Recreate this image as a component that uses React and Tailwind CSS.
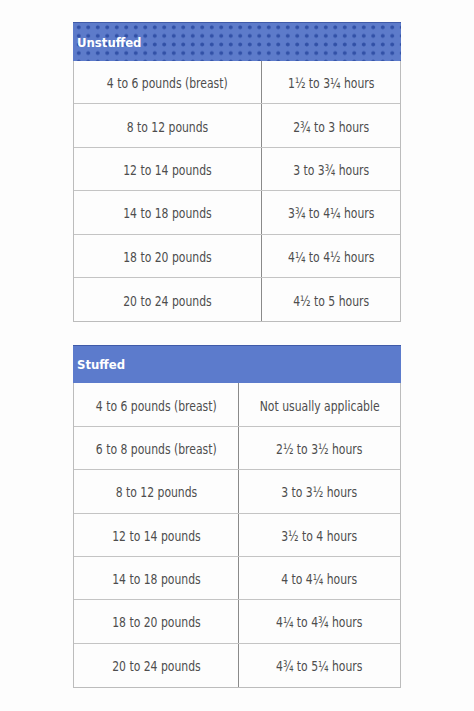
import React from "react";

const unstuffed = [
  ["4 to 6 pounds (breast)", "1½ to 3¼ hours"],
  ["8 to 12 pounds", "2¾ to 3 hours"],
  ["12 to 14 pounds", "3 to 3¾ hours"],
  ["14 to 18 pounds", "3¾ to 4¼ hours"],
  ["18 to 20 pounds", "4¼ to 4½ hours"],
  ["20 to 24 pounds", "4½ to 5 hours"],
];

const stuffed = [
  ["4 to 6 pounds (breast)", "Not usually applicable"],
  ["6 to 8 pounds (breast)", "2½ to 3½ hours"],
  ["8 to 12 pounds", "3 to 3½ hours"],
  ["12 to 14 pounds", "3½ to 4 hours"],
  ["14 to 18 pounds", "4 to 4¼ hours"],
  ["18 to 20 pounds", "4¼ to 4¾ hours"],
  ["20 to 24 pounds", "4¾ to 5¼ hours"],
];

function Cell({ children, className = "" }) {
  return (
    <div className={"flex items-center justify-center pt-[3px] " + className}>
      <span className="inline-block scale-x-[0.86] whitespace-nowrap text-[14px] text-[#4d4d4d] [font-family:'DejaVu_Sans_Condensed','DejaVu_Sans',sans-serif]">
        {children}
      </span>
    </div>
  );
}

function Table({ title, rows, leftW, dotted, headerH, mt }) {
  return (
    <div className={"ml-[73px] w-[328px] " + mt}>
      <div
        className={
          "flex items-end pl-[4px] pb-[12px] border-t border-[#3f5aa8] " +
          headerH +
          " " +
          (dotted
            ? "bg-[#5d7bca] bg-[radial-gradient(circle_at_center,#3150a6_1.5px,transparent_2.3px)] bg-[length:9.5px_8.6px] bg-[position:1px_0px]"
            : "bg-[#5c7bcc]")
        }
      >
        <span className="text-[13px] font-bold leading-none text-white [font-family:'DejaVu_Sans_Condensed','DejaVu_Sans',sans-serif]">
          {title}
        </span>
      </div>
      <div className="border-l border-r border-b border-[#bcbcbc]">
        {rows.map((r, i) => (
          <div
            key={i}
            className={
              "flex h-[43.4px] " +
              (i < rows.length - 1 ? "border-b border-[#c4c4c4]" : "")
            }
          >
            <Cell className={leftW + " border-r border-[#8a8a8a]"}>{r[0]}</Cell>
            <Cell className="flex-1">{r[1]}</Cell>
          </div>
        ))}
      </div>
    </div>
  );
}

export default function App() {
  return (
    <div className="h-[711px] w-[474px] overflow-hidden bg-[#fdfdfd]">
      <Table
        title="Unstuffed"
        rows={unstuffed}
        leftW="w-[188px]"
        dotted
        headerH="h-[39px]"
        mt="pt-[22px]"
      />
      <Table
        title="Stuffed"
        rows={stuffed}
        leftW="w-[165px]"
        headerH="h-[38px]"
        mt="mt-[23px]"
      />
    </div>
  );
}
